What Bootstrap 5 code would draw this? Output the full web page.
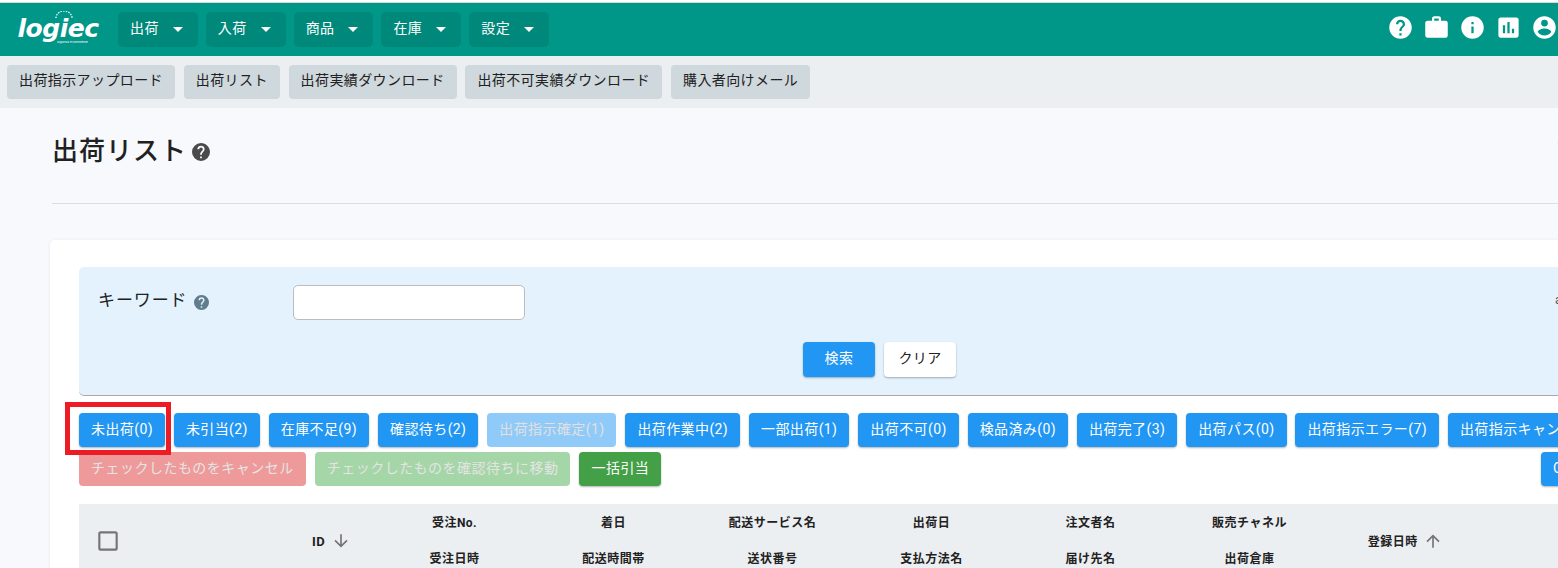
<!DOCTYPE html>
<html lang="ja">
<head>
<meta charset="utf-8">
<title>出荷リスト</title>
<link href="https://cdn.jsdelivr.net/npm/bootstrap@5.3.0/dist/css/bootstrap.min.css" rel="stylesheet">
<style>
html,body{height:568px;overflow:hidden;}
body{width:1558px;background:#f8f9fd;font-family:Roboto,"Noto Sans CJK JP",sans-serif;color:#212121;font-size:14px;}
.top-line{height:3px;background:#fff;border-bottom:1px solid #d5d8da;}
.app-bar{height:53px;background:#009688;padding:0 0 0 17px;flex-wrap:nowrap;justify-content:flex-start;}
.logo-box{width:82px;height:32px;margin-right:19px;color:#fff;position:relative;line-height:1;}
.logo-word{font-family:"DejaVu Sans",sans-serif;font-weight:700;font-style:italic;font-size:25px;letter-spacing:-.5px;display:block;line-height:30px;text-align:center;}
.logo-arc{position:absolute;left:38px;top:-3px;width:18px;height:8px;}
.logo-sub{position:absolute;left:40px;top:27px;width:42px;font-size:3px;line-height:3px;white-space:nowrap;overflow:hidden;letter-spacing:.1px;}
.menu-btn{background:#00897b;border:0;color:#fff;font-size:14px;letter-spacing:.4px;height:35px;padding:0 15px 2px 12px;margin-right:8px;border-radius:5px;display:flex;align-items:center;gap:14px;}
.menu-btn:hover{background:#00897b;color:#fff;}
.caret-mark{width:0;height:0;border-left:5px solid transparent;border-right:5px solid transparent;border-top:5px solid #fff;margin-top:2px;}
.bar-icons{gap:9px;margin-left:auto;margin-right:0;margin-top:-4px;}
.bar-icons svg{width:27px;height:27px;fill:#fff;display:block;}
.sub-bar{height:52px;background:#eceff1;padding:9px 7px;gap:8.8px;flex-wrap:nowrap;}
.sub-btn{background:#cfd8dc;border:0;color:#212121;font-size:14px;letter-spacing:.4px;height:34px;padding:0 12px 3px;border-radius:4px;white-space:nowrap;}
.page-area{padding:0 0 0 52px;}
.page-head{height:96px;border-bottom:1px solid #dcdfe2;padding-top:24px;position:relative;}
.page-title{font-size:26px;line-height:38px;font-weight:500;margin:0;color:#212121;letter-spacing:1px;display:flex;align-items:center;gap:5px;}
.page-title svg{width:18px;height:18px;fill:#4a4a4a;margin-top:2px;}
.edge-mark{position:absolute;left:1502px;top:28px;color:#2196f3;font-size:14px;font-weight:700;}
.main-sheet{margin:36px 0 0 -2px;width:1600px;height:400px;border:0;border-radius:5px;box-shadow:0 0 4px rgba(0,0,0,.06);padding:27px 29px;background:#fff;}
.search-box{height:129px;background:#e3f2fd;border-radius:5px 0 0 5px;border-bottom:1px solid #aaa;padding:18px 19px;position:relative;}
.search-row{height:35px;}
.kw-label{width:195px;font-size:17px;letter-spacing:.9px;display:flex;align-items:center;gap:6px;padding-bottom:4px;}
.kw-label svg{width:15px;height:15px;fill:#607d8b;margin-top:4px;}
.kw-input{width:232px;height:35px;border-color:#bdbdbd;border-radius:5px;}
.edge-char{position:absolute;left:1476px;top:24px;font-size:12px;color:#555;}
.search-acts{gap:9px;margin-top:22px;margin-left:705px;}
.act-main{background:#2196f3;color:#fff;border:0;height:35px;width:72px;font-size:14px;letter-spacing:.4px;border-radius:4px;box-shadow:0 1px 2px rgba(0,0,0,.3);padding:0 0 2px;}
.act-plain{background:#fff;color:#212121;border:0;height:35px;width:72px;font-size:14px;letter-spacing:.4px;border-radius:4px;box-shadow:0 1px 2px rgba(0,0,0,.3);padding:0 0 2px;}
.status-row{margin-top:17px;gap:8.95px;flex-wrap:nowrap;width:1500px;}
.stat-btn{background:#2196f3;color:#fff;border:0;height:34px;padding:0 12px 2px;font-size:14px;letter-spacing:.4px;border-radius:4px;white-space:nowrap;box-shadow:0 1px 2px rgba(0,0,0,.3);position:relative;flex:none;}
.stat-btn:disabled{background:#90caf9;color:#e0e0e0;opacity:1;box-shadow:none;}
.ring-mark{position:absolute;left:-14px;right:-6px;top:-11px;bottom:-8px;border:5px solid #ed1c24;pointer-events:none;}
.bulk-row{margin-top:5px;gap:9px;flex-wrap:nowrap;width:1522px;}
.bulk-btn{height:34px;padding:0 12px 2px;font-size:14px;letter-spacing:.48px;border:0;border-radius:4px;color:#fff;white-space:nowrap;flex:none;}
.bulk-btn:disabled{opacity:1;color:#e4e4e4;}
.bulk-btn.tone-red,.bulk-btn.tone-red:disabled{background:#ef9a9a;}
.bulk-btn.tone-lime,.bulk-btn.tone-lime:disabled{background:#a5d6a7;}
.bulk-btn.tone-green{background:#43a047;box-shadow:0 1px 2px rgba(0,0,0,.3);}
.bulk-btn.tone-blue{background:#2196f3;margin-left:auto;width:60px;text-align:left;box-shadow:0 1px 2px rgba(0,0,0,.3);}
.list-head{table-layout:fixed;width:1603px;margin:18px 0 0;border-collapse:collapse;}
.list-head th{background:#eceff1;border:0;padding:2px 0 0;font-size:12px;letter-spacing:.5px;font-weight:700;text-align:center;vertical-align:middle;height:72px;color:#212121;box-shadow:none;}
.list-head th.w-check{width:201px;text-align:left;padding-left:16px;}
.list-head th.w-id{width:95px;padding-left:8px;font-size:13px;}
.list-head th.w-col{width:159px;}
.list-head th.w-date{width:153px;}
.list-head th.w-rest{width:200px;}
.list-head th svg{width:20px;height:20px;fill:#757575;vertical-align:-5px;margin-left:2px;}
.list-head th svg.box-mark{width:26px;height:26px;margin:0;vertical-align:middle;}
.cell-line{display:block;line-height:18px;}
.cell-line+.cell-line{margin-top:18px;}
</style>
</head>
<body>
<div class="top-line"></div>
<nav class="navbar app-bar">
  <div class="logo-box"><span class="logo-word">logiec</span>
    <svg class="logo-arc" viewBox="0 0 18 8"><path d="M1 7A8 7 0 0 1 17 7" fill="none" stroke="#fff" stroke-width="1.3" stroke-dasharray="1.5 1.2"/></svg>
    <span class="logo-sub">logistics e-commerce</span></div>
  <button class="btn menu-btn" type="button">出荷<span class="caret-mark"></span></button>
  <button class="btn menu-btn" type="button">入荷<span class="caret-mark"></span></button>
  <button class="btn menu-btn" type="button">商品<span class="caret-mark"></span></button>
  <button class="btn menu-btn" type="button">在庫<span class="caret-mark"></span></button>
  <button class="btn menu-btn" type="button">設定<span class="caret-mark"></span></button>
  <div class="d-flex align-items-center bar-icons">
    <svg viewBox="0 0 24 24"><path d="M15.07,11.25L14.17,12.17C13.45,12.89 13,13.5 13,15H11V14.5C11,13.39 11.45,12.39 12.17,11.67L13.41,10.41C13.78,10.05 14,9.55 14,9C14,7.89 13.1,7 12,7A2,2 0 0,0 10,9H8A4,4 0 0,1 12,5A4,4 0 0,1 16,9C16,9.88 15.64,10.67 15.07,11.25M13,19H11V17H13M12,2A10,10 0 0,0 2,12A10,10 0 0,0 12,22A10,10 0 0,0 22,12C22,6.47 17.5,2 12,2Z"/></svg>
    <svg viewBox="0 0 24 24"><path d="M10,2H14A2,2 0 0,1 16,4V6H20A2,2 0 0,1 22,8V19A2,2 0 0,1 20,21H4C2.89,21 2,20.1 2,19V8C2,6.89 2.89,6 4,6H8V4C8,2.89 8.89,2 10,2M14,6V4H10V6H14Z"/></svg>
    <svg viewBox="0 0 24 24"><path d="M13,9H11V7H13M13,17H11V11H13M12,2A10,10 0 0,0 2,12A10,10 0 0,0 12,22A10,10 0 0,0 22,12A10,10 0 0,0 12,2Z"/></svg>
    <svg viewBox="0 0 24 24"><path d="M9 17H7V10H9V17M13 17H11V7H13V17M17 17H15V13H17V17M19 3H5C3.89 3 3 3.89 3 5V19C3 20.1 3.89 21 5 21H19C20.1 21 21 20.1 21 19V5C21 3.89 20.1 3 19 3Z"/></svg>
    <svg viewBox="0 0 24 24"><path d="M12,19.2C9.5,19.2 7.29,17.92 6,16C6.03,14 10,12.9 12,12.9C14,12.9 17.97,14 18,16C16.71,17.92 14.5,19.2 12,19.2M12,5A3,3 0 0,1 15,8A3,3 0 0,1 12,11A3,3 0 0,1 9,8A3,3 0 0,1 12,5M12,2A10,10 0 0,0 2,12A10,10 0 0,0 12,22A10,10 0 0,0 22,12C22,6.47 17.5,2 12,2Z"/></svg>
  </div>
</nav>
<div class="d-flex sub-bar">
  <button class="btn sub-btn" type="button">出荷指示アップロード</button>
  <button class="btn sub-btn" type="button">出荷リスト</button>
  <button class="btn sub-btn" type="button">出荷実績ダウンロード</button>
  <button class="btn sub-btn" type="button">出荷不可実績ダウンロード</button>
  <button class="btn sub-btn" type="button">購入者向けメール</button>
</div>
<main class="page-area">
  <div class="page-head">
    <h1 class="page-title">出荷リスト<svg viewBox="2 2 20 20"><path d="M15.07,11.25L14.17,12.17C13.45,12.89 13,13.5 13,15H11V14.5C11,13.39 11.45,12.39 12.17,11.67L13.41,10.41C13.78,10.05 14,9.55 14,9C14,7.89 13.1,7 12,7A2,2 0 0,0 10,9H8A4,4 0 0,1 12,5A4,4 0 0,1 16,9C16,9.88 15.64,10.67 15.07,11.25M13,19H11V17H13M12,2A10,10 0 0,0 2,12A10,10 0 0,0 12,22A10,10 0 0,0 22,12C22,6.47 17.5,2 12,2Z"/></svg></h1>
    <span class="edge-mark">↑</span>
  </div>
  <div class="card main-sheet">
    <div class="search-box">
      <div class="d-flex align-items-center search-row">
        <div class="kw-label">キーワード<svg viewBox="2 2 20 20"><path d="M15.07,11.25L14.17,12.17C13.45,12.89 13,13.5 13,15H11V14.5C11,13.39 11.45,12.39 12.17,11.67L13.41,10.41C13.78,10.05 14,9.55 14,9C14,7.89 13.1,7 12,7A2,2 0 0,0 10,9H8A4,4 0 0,1 12,5A4,4 0 0,1 16,9C16,9.88 15.64,10.67 15.07,11.25M13,19H11V17H13M12,2A10,10 0 0,0 2,12A10,10 0 0,0 12,22A10,10 0 0,0 22,12C22,6.47 17.5,2 12,2Z"/></svg></div>
        <input class="form-control kw-input" type="text" aria-label="キーワード">
      </div>
      <span class="edge-char">a</span>
      <div class="d-flex search-acts">
        <button class="btn act-main" type="button">検索</button>
        <button class="btn act-plain" type="button">クリア</button>
      </div>
    </div>
    <div class="d-flex status-row">
      <button class="btn stat-btn" type="button">未出荷(0)<span class="ring-mark"></span></button>
      <button class="btn stat-btn" type="button">未引当(2)</button>
      <button class="btn stat-btn" type="button">在庫不足(9)</button>
      <button class="btn stat-btn" type="button">確認待ち(2)</button>
      <button class="btn stat-btn" type="button" disabled>出荷指示確定(1)</button>
      <button class="btn stat-btn" type="button">出荷作業中(2)</button>
      <button class="btn stat-btn" type="button">一部出荷(1)</button>
      <button class="btn stat-btn" type="button">出荷不可(0)</button>
      <button class="btn stat-btn" type="button">検品済み(0)</button>
      <button class="btn stat-btn" type="button">出荷完了(3)</button>
      <button class="btn stat-btn" type="button">出荷パス(0)</button>
      <button class="btn stat-btn" type="button">出荷指示エラー(7)</button>
      <button class="btn stat-btn" type="button">出荷指示キャンセル(0)</button>
    </div>
    <div class="d-flex bulk-row">
      <button class="btn bulk-btn tone-red" type="button" disabled>チェックしたものをキャンセル</button>
      <button class="btn bulk-btn tone-lime" type="button" disabled>チェックしたものを確認待ちに移動</button>
      <button class="btn bulk-btn tone-green" type="button">一括引当</button>
      <button class="btn bulk-btn tone-blue" type="button">CSV</button>
    </div>
    <table class="table list-head">
      <thead><tr>
        <th class="w-check"><svg class="box-mark" viewBox="0 0 24 24"><path d="M19,3H5C3.89,3 3,3.89 3,5V19A2,2 0 0,0 5,21H19A2,2 0 0,0 21,19V5C21,3.89 20.1,3 19,3M19,5V19H5V5H19Z"/></svg></th>
        <th class="w-id">ID <svg viewBox="0 0 24 24"><path d="M11,4H13V16L18.5,10.5L19.92,11.92L12,19.84L4.08,11.92L5.5,10.5L11,16V4Z"/></svg></th>
        <th class="w-col"><span class="cell-line">受注No.</span><span class="cell-line">受注日時</span></th>
        <th class="w-col"><span class="cell-line">着日</span><span class="cell-line">配送時間帯</span></th>
        <th class="w-col"><span class="cell-line">配送サービス名</span><span class="cell-line">送状番号</span></th>
        <th class="w-col"><span class="cell-line">出荷日</span><span class="cell-line">支払方法名</span></th>
        <th class="w-col"><span class="cell-line">注文者名</span><span class="cell-line">届け先名</span></th>
        <th class="w-col"><span class="cell-line">販売チャネル</span><span class="cell-line">出荷倉庫</span></th>
        <th class="w-date">登録日時 <svg viewBox="0 0 24 24"><path d="M13,20H11V8L5.5,13.5L4.08,12.08L12,4.16L19.92,12.08L18.5,13.5L13,8V20Z"/></svg></th>
        <th class="w-rest"></th>
      </tr></thead>
    </table>
  </div>
</main>
<script src="https://cdn.jsdelivr.net/npm/bootstrap@5.3.0/dist/js/bootstrap.bundle.min.js"></script>
</body>
</html>
